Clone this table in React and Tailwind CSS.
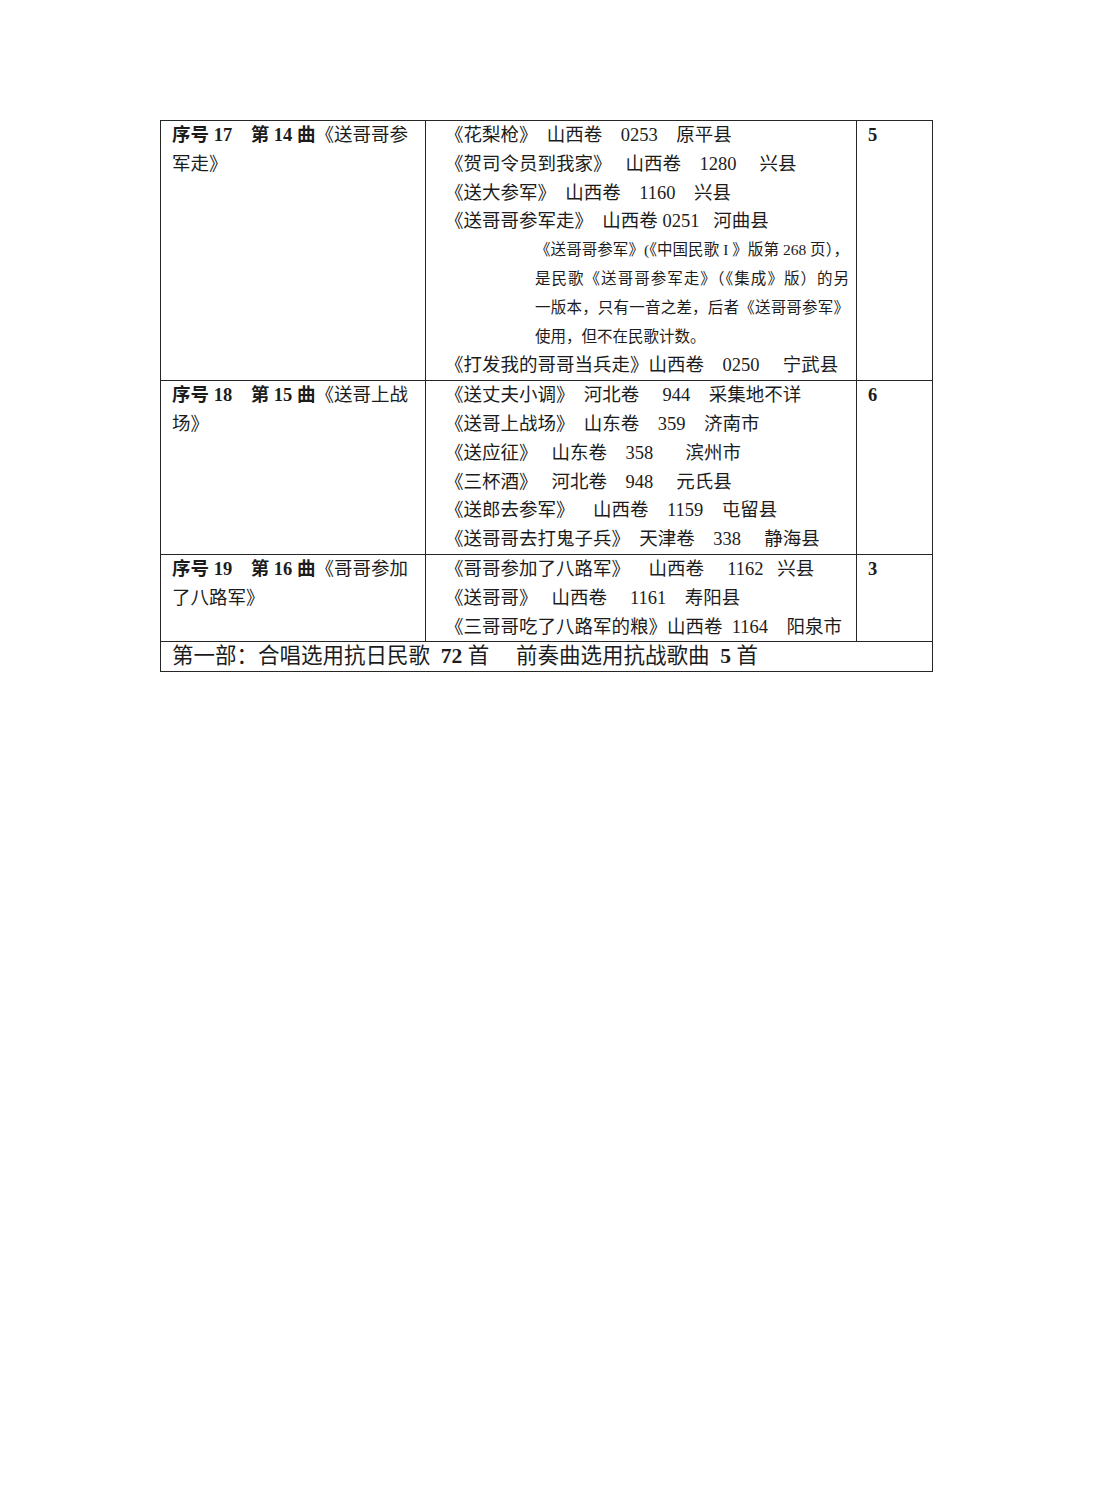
import React from 'react'

// join segments: text, spaces, text, spaces, ...
const L = (...parts) =>
    parts.map((p) => (typeof p === 'number' ? ' '.repeat(p) : p)).join('')

const rows = [
    {
        no: '17', qu: '14', title1: '《送哥哥参', title2: '军走》', count: '5',
        lines: [
            L('《花梨枪》', 2, '山西卷', 4, '0253', 4, '原平县'),
            L('《贺司令员到我家》', 3, '山西卷', 4, '1280', 5, '兴县'),
            L('《送大参军》', 2, '山西卷', 4, '1160', 4, '兴县'),
            L('《送哥哥参军走》', 2, '山西卷', 1, '0251', 3, '河曲县'),
        ],
        note: true,
        tail: [L('《打发我的哥哥当兵走》', '山西卷', 4, '0250', 5, '宁武县')],
    },
    {
        no: '18', qu: '15', title1: '《送哥上战', title2: '场》', count: '6',
        lines: [
            L('《送丈夫小调》', 2, '河北卷', 5, '944', 4, '采集地不详'),
            L('《送哥上战场》', 2, '山东卷', 4, '359', 4, '济南市'),
            L('《送应征》', 3, '山东卷', 4, '358', 7, '滨州市'),
            L('《三杯酒》', 3, '河北卷', 4, '948', 5, '元氏县'),
            L('《送郎去参军》', 4, '山西卷', 4, '1159', 4, '屯留县'),
            L('《送哥哥去打鬼子兵》', 2, '天津卷', 4, '338', 5, '静海县'),
        ],
    },
    {
        no: '19', qu: '16', title1: '《哥哥参加', title2: '了八路军》', count: '3',
        lines: [
            L('《哥哥参加了八路军》', 4, '山西卷', 5, '1162', 3, '兴县'),
            L('《送哥哥》', 3, '山西卷', 5, '1161', 4, '寿阳县'),
            L('《三哥哥吃了八路军的粮》', '山西卷', 2, '1164', 4, '阳泉市'),
        ],
    },
]

function Note() {
    return (
        <div className="ml-[90px] w-[314px] text-[15.5px] leading-[28.8px]">
            <div className="text-justify [text-align-last:justify]">《送哥哥参军》(《中国民歌 I 》版第 268 页），</div>
            <div className="text-justify [text-align-last:justify]">是民歌《送哥哥参军走》（《集成》版）的另</div>
            <div className="text-justify [text-align-last:justify]">一版本，只有一音之差，后者《送哥哥参军》</div>
            <div>使用，但不在民歌计数。</div>
        </div>
    )
}

export default function App() {
    return (
        <div className="min-h-[1506px] w-[1100px] bg-white pt-[120px] pl-[160px] font-['Liberation_Serif','Noto_Sans_CJK_SC',serif] text-[#1c1c1c]">
            <table className="w-[772px] table-fixed border-collapse">
                <colgroup>
                    <col className="w-[265px]" />
                    <col className="w-[431px]" />
                    <col className="w-[76px]" />
                </colgroup>
                <tbody>
                    {rows.map((r) => (
                        <tr key={r.no}>
                            {/* title column */}
                            <td className="border border-[#262626] pl-[11px] align-top text-[18.5px] leading-[28.8px] whitespace-pre">
                                <span className="font-bold">{'序号 ' + r.no + '    第 ' + r.qu + ' 曲'}</span>
                                {r.title1}
                                <br />
                                {r.title2}
                            </td>

                            {/* songs column */}
                            <td className="border border-[#262626] pl-[19px] align-top text-[18.5px] leading-[28.8px]">
                                {r.lines.map((t) => (
                                    <div key={t} className="whitespace-pre">{t}</div>
                                ))}
                                {r.note && <Note />}
                                {r.tail && r.tail.map((t) => (
                                    <div key={t} className="whitespace-pre">{t}</div>
                                ))}
                            </td>

                            {/* count */}
                            <td className="border border-[#262626] pl-[11px] align-top text-[18.5px] leading-[28.8px] font-bold">
                                {r.count}
                            </td>
                        </tr>
                    ))}
                    <tr>
                        <td colSpan={3} className="border border-[#262626] pl-[11px] h-[30px] text-[21.5px] leading-[29px] whitespace-pre">
                            第一部：合唱选用抗日民歌  <span className="font-bold">72</span> 首     前奏曲选用抗战歌曲  <span className="font-bold">5</span> 首
                        </td>
                    </tr>
                </tbody>
            </table>
        </div>
    )
}
